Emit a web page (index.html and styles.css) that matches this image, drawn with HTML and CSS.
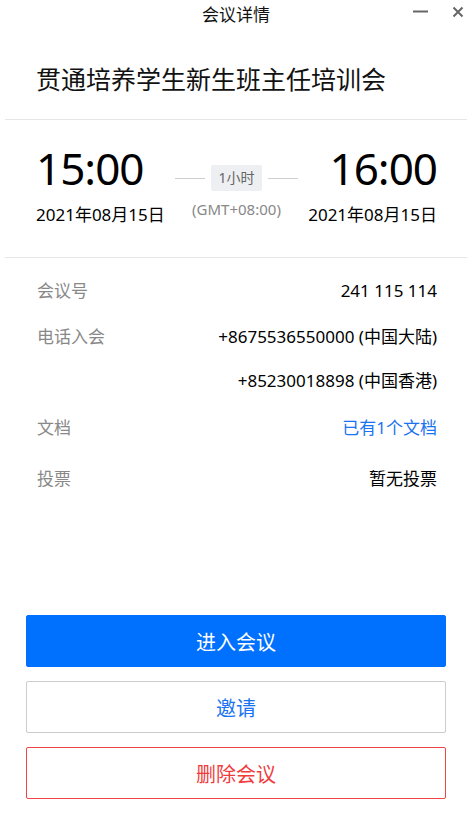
FILE: index.html
```html
<!DOCTYPE html>
<html lang="zh-CN">
<head>
<meta charset="utf-8">
<title>会议详情</title>
<link rel="stylesheet" href="styles.css">
</head>
<body>
<div class="window">
  <header class="titlebar">
    <div class="titlebar-text">会议详情</div>
    <div class="titlebar-controls">
      <svg class="ctrl" width="16" height="16" viewBox="0 0 16 16"><line x1="1" y1="7.5" x2="16" y2="7.5" stroke="#666" stroke-width="2"/></svg>
      <svg class="ctrl" width="12" height="12" viewBox="0 0 12 12"><path d="M1.5 1.5 L10.5 10.5 M10.5 1.5 L1.5 10.5" stroke="#666" stroke-width="2" fill="none"/></svg>
    </div>
  </header>
  <section class="meeting-title">贯通培养学生新生班主任培训会</section>
  <section class="time-block">
    <div class="time-col">
      <div class="time">15:00</div>
      <div class="date">2021年08月15日</div>
    </div>
    <div class="duration-col">
      <div class="duration-row">
        <span class="line"></span>
        <span class="badge">1小时</span>
        <span class="line"></span>
      </div>
      <div class="tz">(GMT+08:00)</div>
    </div>
    <div class="time-col right">
      <div class="time">16:00</div>
      <div class="date">2021年08月15日</div>
    </div>
  </section>
  <section class="info">
    <div class="row"><span class="label">会议号</span><span class="value">241 115 114</span></div>
    <div class="row phone"><span class="label">电话入会</span>
      <div class="values">
        <span class="value">+8675536550000 (中国大陆)</span>
        <span class="value">+85230018898 (中国香港)</span>
      </div>
    </div>
    <div class="row"><span class="label">文档</span><span class="value link">已有1个文档</span></div>
    <div class="row"><span class="label">投票</span><span class="value">暂无投票</span></div>
  </section>
  <section class="actions">
    <button class="btn primary">进入会议</button>
    <button class="btn secondary">邀请</button>
    <button class="btn danger">删除会议</button>
  </section>
</div>
</body>
</html>
```
FILE: styles.css
```css
* { box-sizing: border-box; }
html, body { margin: 0; padding: 0; background: #fff; }
body {
  font-family: "Noto Sans", "Noto Sans CJK SC", sans-serif;
  color: #111;
  width: 472px;
  height: 823px;
  overflow: hidden;
}
.window { display: flex; flex-direction: column; height: 823px; }
.titlebar {
  height: 30px;
  display: flex;
  align-items: center;
  justify-content: center;
  position: relative;
}
.titlebar-text { font-size: 17px; color: #111; line-height: 28px; }
.titlebar-controls {
  position: absolute;
  right: 8px;
  top: 4px;
  display: flex;
  align-items: center;
  gap: 24px;
}
.meeting-title {
  font-size: 25px;
  line-height: 34px;
  padding: 32px 0 23px 31px;
  margin: 0 5px;
  border-bottom: 1px solid #e6e6e6;
  color: #111;
}
.time-block {
  display: flex;
  justify-content: space-between;
  align-items: flex-start;
  padding: 24px 30px 0 31px;
  height: 138px;
  margin: 0 5px;
  border-bottom: 1px solid #e6e6e6;
}
.time-col { display: flex; flex-direction: column; }
.time-col.right { align-items: flex-end; }
.time { font-size: 44px; line-height: 48px; color: #000; letter-spacing: -1px; }
.date { font-size: 17px; line-height: 22px; margin-top: 12px; color: #000; }
.duration-col {
  display: flex;
  flex-direction: column;
  align-items: center;
  padding-top: 21px;
}
.duration-row { display: flex; align-items: center; gap: 6px; }
.line { width: 30px; height: 1px; background: #cfcfcf; }
.badge {
  background: #eeeff2;
  color: #666;
  font-size: 14px;
  line-height: 26px;
  padding: 0 7px;
  border-radius: 2px;
}
.tz { color: #888; font-size: 15px; line-height: 20px; margin-top: 8px; }
.info { padding: 22px 35px 0 37px; display: flex; flex-direction: column; }
.row {
  display: flex;
  justify-content: space-between;
  align-items: flex-start;
  font-size: 17px;
  line-height: 22px;
  margin-bottom: 24px;
}
.row.phone { margin-bottom: 25px; }
.row:nth-child(3) { margin-bottom: 29px; }
.label { color: #888; }
.values { display: flex; flex-direction: column; align-items: flex-end; gap: 22px; }
.value { color: #000; }
.value.link { color: #1a73f0; }
.actions {
  margin-top: auto;
  padding: 0 26px 24px 26px;
  display: flex;
  flex-direction: column;
  gap: 14px;
}
.btn {
  height: 52px;
  width: 100%;
  font-family: "Noto Sans CJK SC", sans-serif;
  font-size: 20px;
  border-radius: 2px;
  background: #fff;
  cursor: pointer;
}
.btn.primary { background: #0070ff; color: #fff; border: 1px solid #0070ff; }
.btn.secondary { border: 1px solid #cccccc; color: #1a73f0; }
.btn.danger { border: 1px solid #f04545; color: #f03c3c; }
```
